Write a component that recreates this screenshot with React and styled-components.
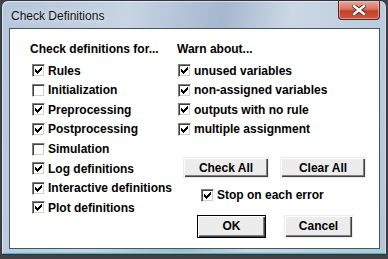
import React from 'react'
import styled, { createGlobalStyle } from 'styled-components'

const GlobalStyle = createGlobalStyle`
  html, body {
    margin: 0;
    padding: 0;
    background: #3f4246;
    width: 388px;
    height: 259px;
    overflow: hidden;
  }
`

const Window = styled.div`
  box-sizing: border-box;
  width: 386px;
  height: 255px;
  margin-left: 1px;
  border: 1px solid #30363e;
  border-radius: 7px 7px 0 0;
  padding: 0 6px 5px 7px;
  display: flex;
  flex-direction: column;
  background:
    linear-gradient(100deg, rgba(255,255,255,0) 0%, rgba(255,255,255,0.25) 30%, rgba(120,140,170,0.25) 52%, rgba(255,255,255,0.3) 68%, rgba(255,255,255,0) 100%),
    #b4c6da;
  box-shadow: inset 1px 1px 0 rgba(255,255,255,0.55), inset -1px 0 0 rgba(255,255,255,0.4), inset 0 -1px 0 #3bbbe6, inset 0 -2px 0 #8fd4ee;
`

const TitleBar = styled.div`
  height: 27px;
  display: flex;
  justify-content: space-between;
  align-items: flex-start;
`

const TitleText = styled.span`
  padding: 8px 0 0 2px;
  font-family: "Liberation Sans", Arial, sans-serif;
  font-size: 12px;
  line-height: 14px;
  color: #141414;
  text-shadow: 0 0 6px rgba(255,255,255,0.9);
`

const CloseButton = styled.div`
  box-sizing: border-box;
  width: 42px;
  height: 19px;
  border: 1px solid #5c251c;
  border-top: none;
  border-radius: 0 0 4px 4px;
  background: linear-gradient(#e8a99a 0%, #d6735f 45%, #c2402a 55%, #d0573e 100%);
  box-shadow: inset 0 0 0 1px rgba(255,210,200,0.5);
  display: flex;
  align-items: center;
  justify-content: center;
`

const Client = styled.div`
  box-sizing: border-box;
  width: 371px;
  height: 221px;
  border: 1px solid #4b5562;
  background: #fff;
  padding: 13px 0 0 20px;
  display: grid;
  grid-template-columns: 147px 1fr;
  font-family: "Liberation Sans", Arial, sans-serif;
  font-weight: bold;
  font-size: 12px;
  color: #000;
`

const Column = styled.div`
  display: flex;
  flex-direction: column;
`

const Heading = styled.div`
  line-height: 14px;
  margin-bottom: 5px;
  white-space: nowrap;
`

const Row = styled.label`
  height: 19.57px;
  display: flex;
  align-items: center;
  gap: 3px;
  padding-left: ${p => p.indent || 2}px;
  white-space: nowrap;
  line-height: 14px;
`

const Box = styled.span`
  box-sizing: border-box;
  width: 13px;
  height: 13px;
  flex: none;
  background: #fff;
  border: 1px solid;
  border-color: #808080 #fff #fff #808080;
  box-shadow: inset 1px 1px 0 #404040, inset -1px -1px 0 #d4d0c8;
  position: relative;
  svg {
    position: absolute;
    left: -1px;
    top: -1px;
  }
`

const ButtonRow = styled.div`
  display: flex;
  gap: ${p => p.gap}px;
  margin-top: ${p => p.top}px;
  padding-left: ${p => p.indent}px;
`

const Button = styled.div`
  box-sizing: border-box;
  width: ${p => p.w}px;
  height: ${p => p.h}px;
  background: #ececec;
  border: 1px solid ${p => (p.primary ? '#000' : 'transparent')};
  box-shadow: inset 1px 1px 0 #fff, inset -1px -1px 0 #404040, inset -2px -2px 0 #808080;
  display: flex;
  align-items: center;
  justify-content: center;
  line-height: 14px;
`

const Check = () => (
  <svg width="13" height="13" viewBox="0 0 13 13" shapeRendering="crispEdges">
    <path
      fill="#000"
      d="M9 3h1v1h-1z M8 4h2v1h-2z M3 5h1v1h-1z M7 5h3v1h-3z M3 6h2v1h-2z M6 6h3v1h-3z M3 7h5v1h-5z M4 8h3v1h-3z M5 9h1v1h-1z"
    />
  </svg>
)

const CheckRow = ({ label, checked, indent }) => (
  <Row indent={indent}>
    <Box>{checked && <Check />}</Box>
    <span>{label}</span>
  </Row>
)

const checkItems = [
  ['Rules', true],
  ['Initialization', false],
  ['Preprocessing', true],
  ['Postprocessing', true],
  ['Simulation', false],
  ['Log definitions', true],
  ['Interactive definitions', true],
  ['Plot definitions', true]
]

const warnItems = [
  'unused variables',
  'non-assigned variables',
  'outputs with no rule',
  'multiple assignment'
]

const App = () => (
  <>
    <GlobalStyle />
    <Window>
      <TitleBar>
        <TitleText>Check Definitions</TitleText>
        <CloseButton>
          <svg width="14" height="10" viewBox="0 0 14 10">
            <path
              d="M2 1 L12 9 M12 1 L2 9"
              stroke="#5a2a22"
              strokeWidth="4.2"
              strokeLinecap="square"
            />
            <path
              d="M2 1 L12 9 M12 1 L2 9"
              stroke="#fff"
              strokeWidth="2.4"
              strokeLinecap="square"
            />
          </svg>
        </CloseButton>
      </TitleBar>
      <Client>
        <Column>
          <Heading>Check definitions for...</Heading>
          {checkItems.map(([label, checked]) => (
            <CheckRow key={label} label={label} checked={checked} />
          ))}
        </Column>
        <Column>
          <Heading>Warn about...</Heading>
          {warnItems.map(label => (
            <CheckRow key={label} label={label} checked indent={1} />
          ))}
          <ButtonRow top={18} indent={6} gap={11}>
            <Button w={86} h={21}>Check All</Button>
            <Button w={86} h={21}>Clear All</Button>
          </ButtonRow>
          <ButtonRow top={7} indent={22} gap={0}>
            <CheckRow label="Stop on each error" checked indent={0} />
          </ButtonRow>
          <ButtonRow top={10} indent={20} gap={18}>
            <Button w={69} h={23} primary>OK</Button>
            <Button w={69} h={23}>Cancel</Button>
          </ButtonRow>
        </Column>
      </Client>
    </Window>
  </>
)

export default App
